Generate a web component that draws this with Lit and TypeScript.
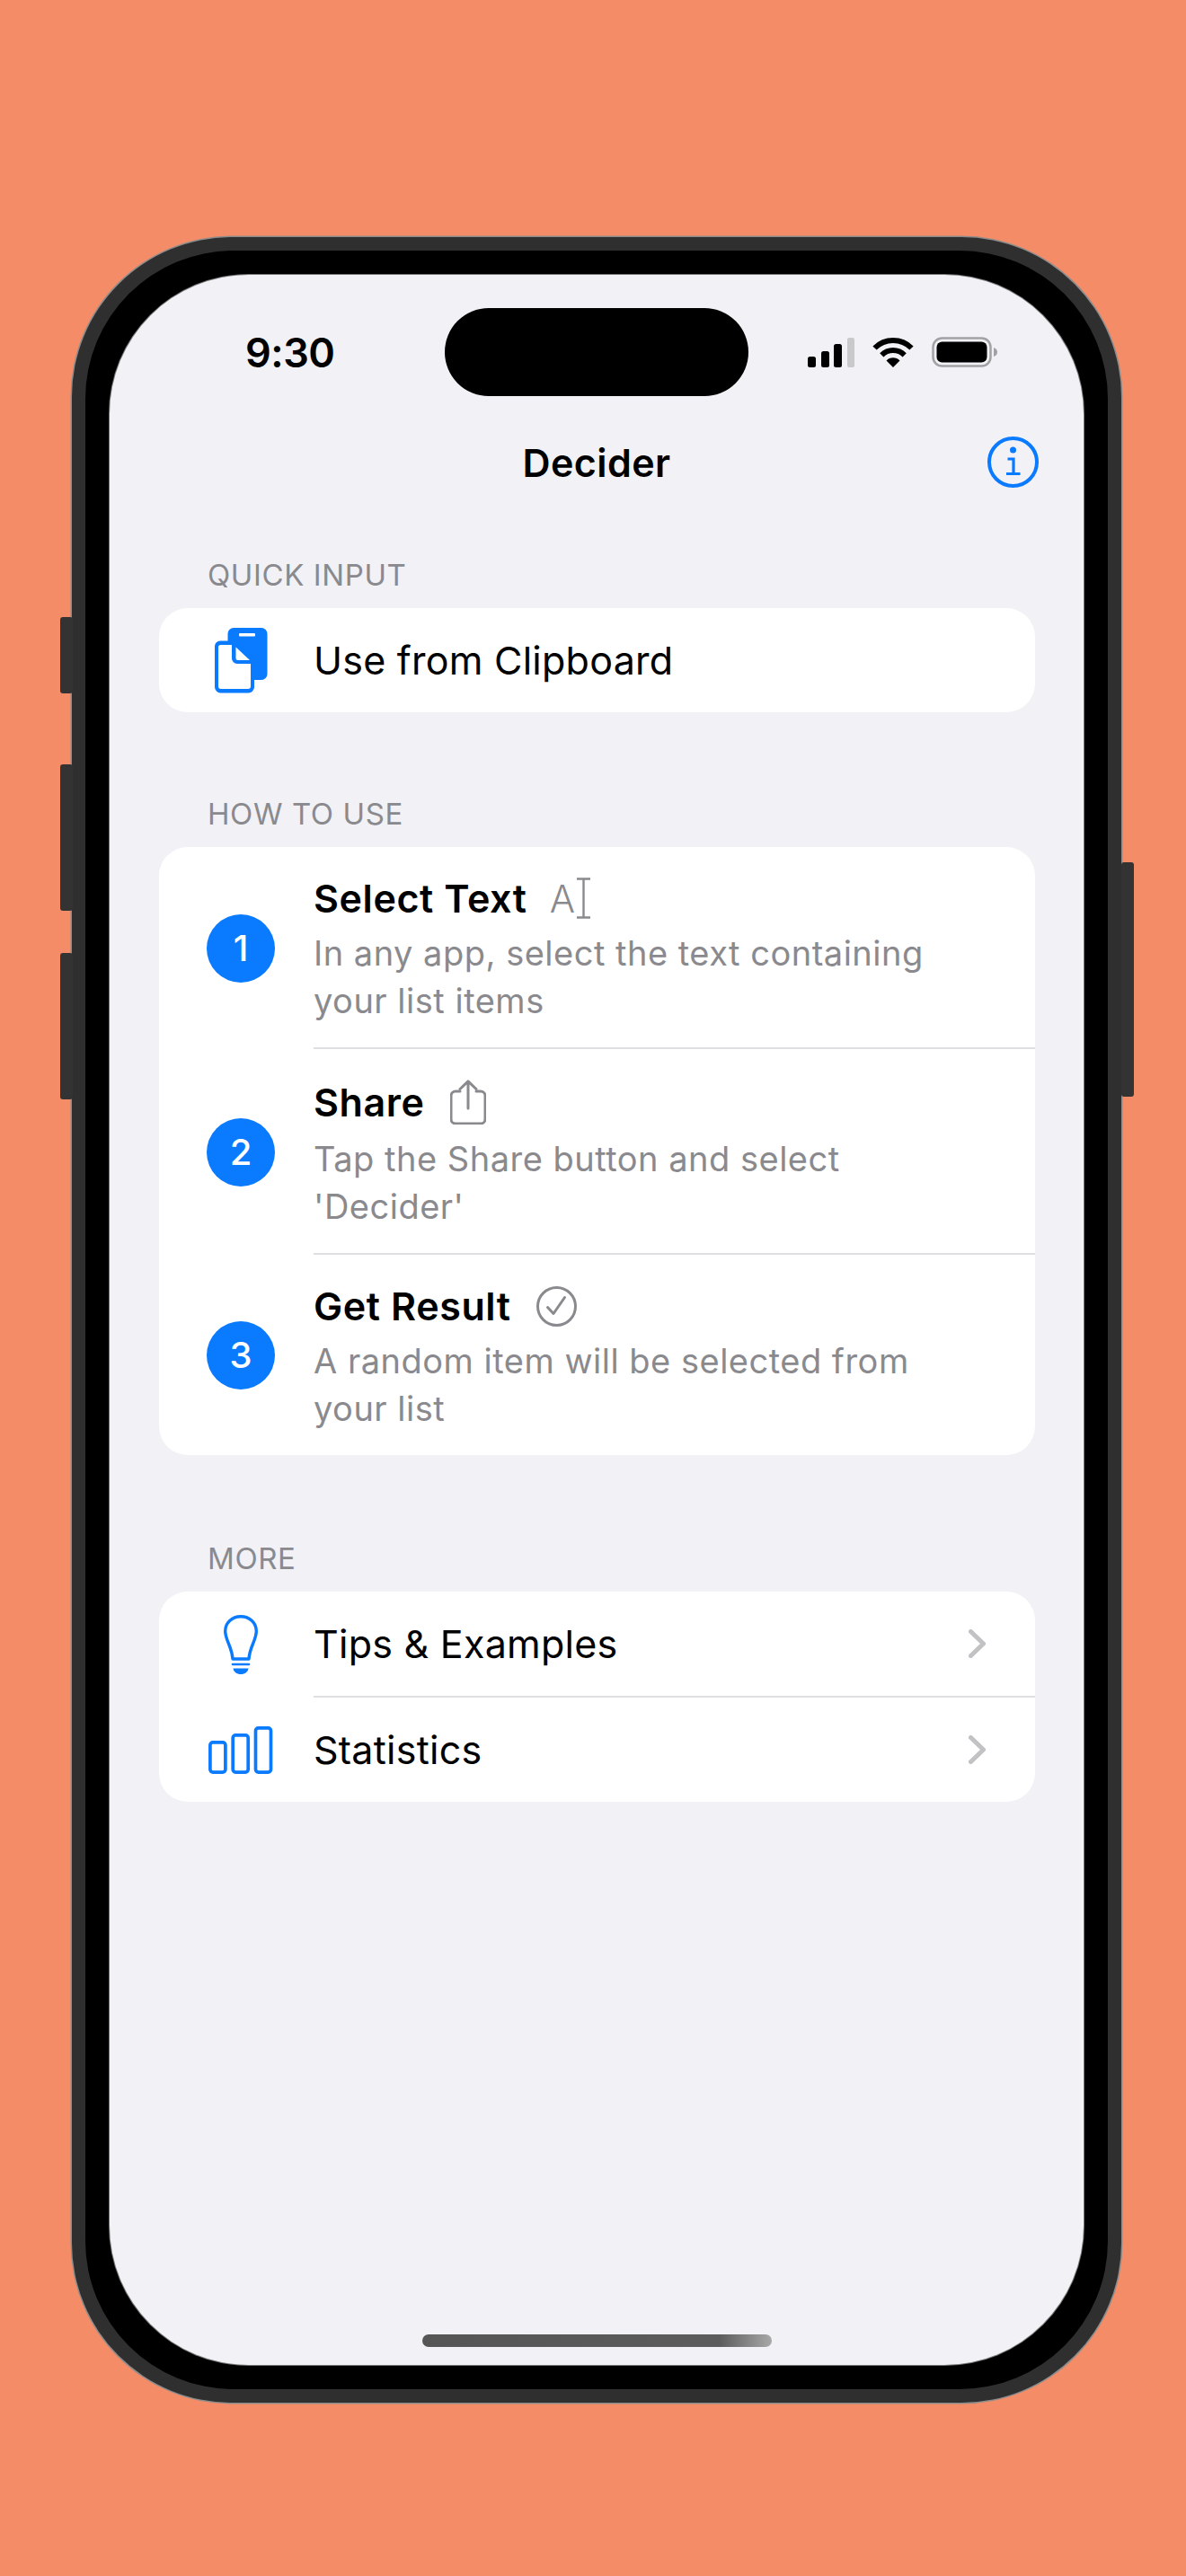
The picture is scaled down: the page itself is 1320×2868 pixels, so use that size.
import { LitElement, html, css, svg } from 'lit';
import { customElement } from 'lit/decorators.js';

const clipboardIcon = html`<svg width="59" height="73" viewBox="0 0 59 73">
  <rect x="14.5" y="0" width="44" height="58" rx="6.5" fill="#0a7aff"></rect>
  <rect x="27" y="6" width="18" height="3.5" rx="1" fill="#fff"></rect>
  <path fill="#0a7aff" d="M6 14.5H22a5 5 0 0 1 3.5 1.5L42.5 33a5 5 0 0 1 1.5 3.5V66a6.5 6.5 0 0 1-6.5 6.5H6.5A6.5 6.5 0 0 1 0 66V20.5a6 6 0 0 1 6-6Z"></path>
  <path fill="#fff" d="M6.5 19H19V34a6 6 0 0 0 6 6H40V65a3 3 0 0 1-3 3H7a3 3 0 0 1-3-3V21.500a2.500 2.500 0 0 1 2.500-2.500Z"></path>
  <path fill="#fff" d="M23.500 21.500 39 36H25.500a2 2 0 0 1-2-2Z"></path>
</svg>`;

const bulbIcon = html`<svg width="38" height="66" viewBox="0 0 38 66" fill="none" stroke="#0a7aff">
  <path stroke-width="3.4" stroke-linejoin="round" d="M19 1.700C9 1.700 1.700 9 1.700 18 1.700 28 9 35 10 49H28C29 35 36.300 28 36.300 18 36.300 9 29 1.700 19 1.700Z"></path>
  <path stroke-width="2.600" stroke-linecap="round" d="M10 55H28"></path>
  <path stroke="none" fill="#0a7aff" d="M10.500 59.500H27.500C27 63.500 23.500 66 19 66S11 63.500 10.500 59.500Z"></path>
</svg>`;

const barsIcon = html`<svg width="72" height="53" viewBox="0 0 72 53" fill="none" stroke="#0a7aff" stroke-width="3.700">
  <rect x="1.900" y="17.900" width="17" height="33.200" rx="3"></rect>
  <rect x="27.200" y="9.900" width="17" height="41.200" rx="3"></rect>
  <rect x="52.500" y="1.900" width="17" height="49.200" rx="3"></rect>
</svg>`;

const infoIcon = html`<svg width="57" height="57" viewBox="0 0 57 57" fill="none" stroke="#0a7aff">
  <circle cx="28.500" cy="28.500" r="26.500" stroke-width="4"></circle>
  <circle cx="28.500" cy="15" r="3.500" fill="#0a7aff" stroke="none"></circle>
  <path stroke-width="3.200" d="M22.500 25H29V41.500M21 41.500H36.500"></path>
</svg>`;

const chevron = html`<svg width="19" height="32" viewBox="0 0 19 32" fill="none" stroke="#c2c2c4" stroke-width="5" stroke-linecap="round" stroke-linejoin="round">
  <path d="M2.500 2.500 16.500 16 2.500 29.500"></path>
</svg>`;

const cursorIcon = html`<span class="glyph-a">A</span><svg class="beam" width="15" height="46" viewBox="0 0 15 46" fill="none" stroke="#8a8a8e" stroke-width="2.400">
  <path d="M0 1.500H15M0 44.500H15M7.500 1.500V44.500"></path>
</svg>`;

const shareIcon = html`<svg width="40" height="50" viewBox="0 0 40 50" fill="none" stroke="#8a8a8e" stroke-width="3" stroke-linecap="round" stroke-linejoin="round">
  <path d="M11 13H6a5 5 0 0 0-5 5V44a5 5 0 0 0 5 5H34a5 5 0 0 0 5-5V18a5 5 0 0 0-5-5H29"></path>
  <path d="M20 32V2M11 10.500 20 1.800 29 10.500"></path>
</svg>`;

const checkIcon = html`<svg width="45" height="45" viewBox="0 0 45 45" fill="none" stroke="#8a8a8e" stroke-width="3" stroke-linecap="round" stroke-linejoin="round">
  <circle cx="22.500" cy="22.500" r="21"></circle>
  <path d="M12.500 23.500 19 30.500 31.500 12.500"></path>
</svg>`;

const steps = [
  { n: 1, title: 'Select Text', icon: cursorIcon, text: 'In any app, select the text containing your list items', tall: false },
  { n: 2, title: 'Share', icon: shareIcon, text: "Tap the Share button and select 'Decider'", tall: true },
  { n: 3, title: 'Get Result', icon: checkIcon, text: 'A random item will be selected from your list', tall: false },
];

@customElement('app-root')
export class AppRoot extends LitElement {
  static styles = css`
    :host {
      display: block;
      width: 1320px;
      height: 2868px;
      box-sizing: border-box;
      padding: 264px 0 0 80px;
      background: #f48d67;
      font-family: Inter, "Liberation Sans", sans-serif;
      color: #000;
    }
    .phone {
      position: relative;
      box-sizing: border-box;
      width: 1168px;
      height: 2411px;
      padding: 15px;
      background: #2f2f2f;
      border-radius: 178px;
      box-shadow: 0 0 0 1.5px #8c8c8c;
    }
    .btn {
      position: absolute;
      background: #333;
      border-radius: 3px;
      width: 14px;
    }
    .btn.mute { left: -13px; top: 423px; height: 85px; }
    .btn.up { left: -13px; top: 587px; height: 163px; }
    .btn.down { left: -13px; top: 797px; height: 163px; }
    .btn.power { right: -14px; top: 696px; height: 261px; }
    .bezel {
      box-sizing: border-box;
      height: 100%;
      padding: 27px;
      background: #000;
      border-radius: 165px;
    }
    .screen {
      display: flex;
      flex-direction: column;
      height: 100%;
      background: #f1f1f6;
      border-radius: 155px;
      box-shadow: 0 0 0 1px #777;
      overflow: hidden;
    }
    .status {
      display: flex;
      align-items: center;
      height: 98px;
      margin-top: 37px;
      flex: none;
    }
    .time {
      width: 373px;
      box-sizing: border-box;
      padding-left: 151px;
      font-size: 45px;
      font-weight: 600;
      letter-spacing: -0.5px;
      white-space: nowrap;
    }
    .island {
      width: 338px;
      height: 98px;
      border-radius: 49px;
      background: #000;
    }
    .status-icons {
      display: flex;
      align-items: center;
      gap: 20px;
      margin-left: 66px;
    }
    .status-icons svg { display: block; }
    .nav {
      display: grid;
      grid-template-columns: 1fr auto 1fr;
      align-items: center;
      height: 147px;
      padding: 0 50px;
      flex: none;
    }
    .nav h1 {
      margin: 0;
      font-size: 43px;
      font-weight: 600;
      line-height: 58px;
      letter-spacing: 0.4px;
    }
    .nav svg { justify-self: end; display: block; }
    .content {
      flex: 1;
      padding: 32px 54px 0 55px;
    }
    .label {
      height: 40px;
      line-height: 40px;
      margin: 0 0 17px;
      padding-left: 54px;
      font-size: 33px;
      font-weight: 400;
      letter-spacing: 0.6px;
      color: #8a8a8e;
    }
    .section + .section { margin-top: 93px; }
    .section.more { margin-top: 95px; }
    .card {
      background: #fff;
      border-radius: 32px;
      overflow: hidden;
    }
    .row {
      display: flex;
      align-items: center;
    }
    .lead {
      flex: none;
      display: flex;
      justify-content: center;
      width: 76px;
      margin: 0 43px 0 53px;
    }
    .num {
      width: 76px;
      height: 76px;
      border-radius: 50%;
      background: #0a7aff;
      color: #fff;
      font-size: 40px;
      font-weight: 500;
      line-height: 76px;
      text-align: center;
    }
    .body {
      flex: 1;
      min-width: 0;
      padding: 28px 0 25px;
    }
    .row:not(:last-child) .body { border-bottom: 2px solid #dfdfe1; }
    .title {
      display: flex;
      align-items: center;
      gap: 28px;
      height: 58px;
      margin-bottom: 6px;
      font-size: 43px;
      font-weight: 600;
      letter-spacing: 0.6px;
    }
    .title.tall { height: 62px; }
    .title svg { display: block; }
    .glyph-a {
      margin-left: -3px;
      font-size: 42px;
      font-weight: 300;
      color: #8a8a8e;
      margin-right: -27px;
    }
    .sub {
      margin: 0;
      padding-right: 100px;
      font-size: 38px;
      letter-spacing: 0.5px;
      line-height: 53px;
      color: #8a8a8e;
    }
    .link {
      flex: 1;
      display: flex;
      align-items: center;
      justify-content: space-between;
      height: 116px;
      padding-right: 55px;
      font-size: 43px;
      letter-spacing: 0.25px;
    }
    .row:not(:last-child) .link { border-bottom: 2px solid #dfdfe1; }
    .home {
      flex: none;
      align-self: center;
      width: 389px;
      height: 14px;
      margin-bottom: 20px;
      border-radius: 7px;
      background: linear-gradient(90deg, #555 0%, #5c5c5c 85%, #a8a8a8 100%);
    }
  `;

  private statusIcons() {
    return html`<div class="status-icons">
      <svg width="52" height="33" viewBox="0 0 52 33">
        <rect x="0" y="21" width="9" height="12" rx="2.500" fill="#000"></rect>
        <rect x="15" y="15" width="9" height="18" rx="2.500" fill="#000"></rect>
        <rect x="29" y="7" width="9" height="26" rx="2.500" fill="#000"></rect>
        <rect x="44" y="0" width="8" height="33" rx="2" fill="#c9c9cb"></rect>
      </svg>
      <svg width="46" height="34" viewBox="0 0 46 34" fill="none" stroke="#000" stroke-width="6">
        <path d="M2.500 12.500A29 29 0 0 1 43.500 12.500"></path>
        <path d="M10.300 20.300A18 18 0 0 1 35.700 20.300"></path>
        ${svg`<path stroke="none" fill="#000" d="M23 34 15.500 26.500A10.500 10.500 0 0 1 30.500 26.500Z"></path>`}
      </svg>
      <svg width="74" height="34" viewBox="0 0 74 34" fill="none">
        <rect x="1.500" y="1.500" width="64" height="31" rx="10" stroke="#a2a2a4" stroke-width="2.500"></rect>
        <rect x="5.500" y="5.500" width="56" height="23" rx="6" fill="#000"></rect>
        <path d="M69 12c3 1 4 3 4 5s-1 4-4 5Z" fill="#a2a2a4"></path>
      </svg>
    </div>`;
  }

  private linkRow(icon: unknown, label: string, arrow = false) {
    return html`<div class="row">
      <div class="lead">${icon}</div>
      <div class="link"><span>${label}</span>${arrow ? chevron : ''}</div>
    </div>`;
  }

  render() {
    return html`
      <div class="phone">
        <div class="btn mute"></div>
        <div class="btn up"></div>
        <div class="btn down"></div>
        <div class="btn power"></div>
        <div class="bezel">
          <div class="screen">
            <div class="status">
              <div class="time">9:30</div>
              <div class="island"></div>
              ${this.statusIcons()}
            </div>
            <div class="nav">
              <span></span>
              <h1>Decider</h1>
              ${infoIcon}
            </div>
            <div class="content">
              <div class="section">
                <div class="label">QUICK INPUT</div>
                <div class="card">${this.linkRow(clipboardIcon, 'Use from Clipboard')}</div>
              </div>
              <div class="section">
                <div class="label">HOW TO USE</div>
                <div class="card">
                  ${steps.map(s => html`<div class="row">
                    <div class="lead"><div class="num">${s.n}</div></div>
                    <div class="body">
                      <div class="title ${s.tall ? 'tall' : ''}"><span>${s.title}</span>${s.icon}</div>
                      <p class="sub">${s.text}</p>
                    </div>
                  </div>`)}
                </div>
              </div>
              <div class="section more">
                <div class="label">MORE</div>
                <div class="card">
                  ${this.linkRow(bulbIcon, 'Tips & Examples', true)}
                  ${this.linkRow(barsIcon, 'Statistics', true)}
                </div>
              </div>
            </div>
            <div class="home"></div>
          </div>
        </div>
      </div>
    `;
  }
}
